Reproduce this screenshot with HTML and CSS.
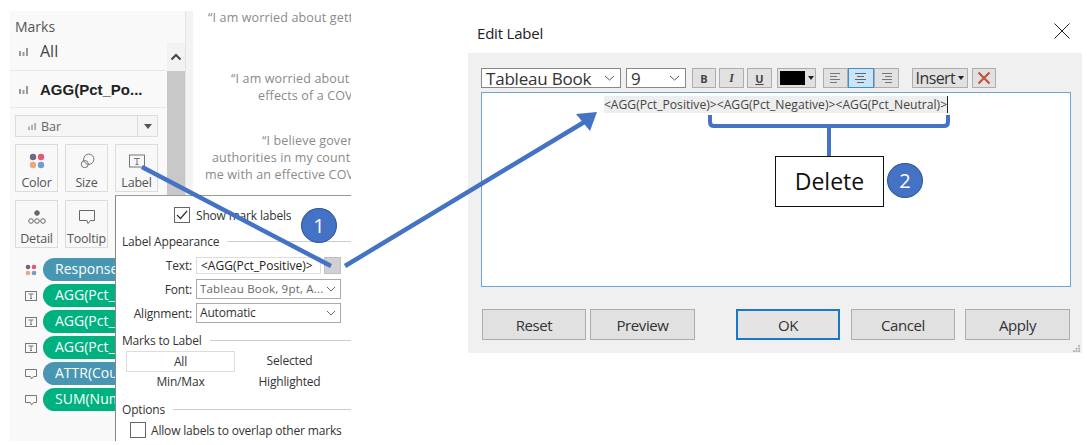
FILE: index.html
```html
<!DOCTYPE html>
<html lang="en">
<head>
<meta charset="utf-8">
<title>Edit Label</title>
<link rel="stylesheet" href="styles.css">
</head>
<body>
<div class="stage">

  <section class="workspace">
    <aside class="marks">
      <div class="marks-title">Marks</div>
      <div class="marks-body">
        <div class="marks-main">
          <div class="layer layer-all">
            <svg class="bars" viewBox="0 0 10 9"><path d="M1 4v5M4.500 5v4M8 1v8" stroke="#999" stroke-width="2"/></svg>
            <span>All</span>
          </div>
          <div class="layer layer-agg">
            <svg class="bars" viewBox="0 0 10 9"><path d="M1 4v5M4.500 5v4M8 1v8" stroke="#999" stroke-width="2"/></svg>
            <b>AGG(Pct_Po...</b>
          </div>
          <div class="mark-type">
            <svg class="bars-small" viewBox="0 0 10 9"><path d="M1 5v4M4.500 3v6M8 1v8" stroke="#aaa" stroke-width="2"/></svg>
            <span class="mark-type-name">Bar</span>
            <span class="mark-type-arrow"><i></i></span>
          </div>
          <div class="cards">
            <div class="card">
              <svg width="16" height="16" viewBox="0 0 16 16"><circle cx="4" cy="4" r="3.200" fill="#6f6585"/><circle cx="12" cy="4" r="3.200" fill="#e8596f"/><circle cx="4" cy="12" r="3.200" fill="#eda77c"/><circle cx="12" cy="12" r="3.200" fill="#6f9fcb"/></svg>
              <span>Color</span>
            </div>
            <div class="card">
              <svg width="18" height="16" viewBox="0 0 18 18" fill="none" stroke="#666"><circle cx="11" cy="7" r="5.800"/><circle cx="6.500" cy="12.500" r="4"/></svg>
              <span>Size</span>
            </div>
            <div class="card">
              <svg width="18" height="16" viewBox="0 0 18 16" fill="none"><rect x="1.500" y="2" width="15" height="12" stroke="#777"/><path d="M6 5.500h6M9 5.500v6M7.500 11.500h3" stroke="#777"/></svg>
              <span>Label</span>
            </div>
            <div class="card">
              <svg width="20" height="16" viewBox="0 0 20 16" fill="none" stroke="#666"><circle cx="10" cy="4" r="2.300" fill="#666"/><circle cx="4" cy="12" r="2.300"/><circle cx="10" cy="12" r="2.300"/><circle cx="16" cy="12" r="2.300"/></svg>
              <span>Detail</span>
            </div>
            <div class="card">
              <svg width="18" height="16" viewBox="0 0 18 16" fill="none"><path d="M1.500 1.500h15v10h-4l-2.500 3-1-3h-7.500z" stroke="#666"/></svg>
              <span>Tooltip</span>
            </div>
          </div>
        </div>
        <div class="marks-scroll">
          <div class="scroll-up"><svg width="12" height="8" viewBox="0 0 12 8" fill="none"><path d="M1.500 6.500l4.500-4.500 4.500 4.500" stroke="#444" stroke-width="2"/></svg></div>
          <div class="scroll-thumb"></div>
        </div>
      </div>
      <ul class="pills">
        <li class="pill-row">
          <svg class="pill-icon" viewBox="0 0 12 12"><circle cx="3" cy="3" r="2.300" fill="#6f6585"/><circle cx="9" cy="3" r="2.300" fill="#e8596f"/><circle cx="3" cy="9" r="2.300" fill="#eda77c"/><circle cx="9" cy="9" r="2.300" fill="#6f9fcb"/></svg>
          <span class="pill pill-blue">Response</span>
        </li>
        <li class="pill-row">
          <svg class="pill-icon" viewBox="0 0 12 12" fill="none" stroke="#777"><rect x=".5" y="1.500" width="11" height="9"/><path d="M3.500 4h5M6 4v4.500M5 8.500h2"/></svg>
          <span class="pill pill-green">AGG(Pct_Positive)</span>
        </li>
        <li class="pill-row">
          <svg class="pill-icon" viewBox="0 0 12 12" fill="none" stroke="#777"><rect x=".5" y="1.500" width="11" height="9"/><path d="M3.500 4h5M6 4v4.500M5 8.500h2"/></svg>
          <span class="pill pill-green">AGG(Pct_Negative)</span>
        </li>
        <li class="pill-row">
          <svg class="pill-icon" viewBox="0 0 12 12" fill="none" stroke="#777"><rect x=".5" y="1.500" width="11" height="9"/><path d="M3.500 4h5M6 4v4.500M5 8.500h2"/></svg>
          <span class="pill pill-green">AGG(Pct_Neutral)</span>
        </li>
        <li class="pill-row">
          <svg class="pill-icon" viewBox="0 0 12 12" fill="none" stroke="#777"><path d="M.5 1.500h11v7h-3l-2 2.500-1-2.500h-5z"/></svg>
          <span class="pill pill-blue">ATTR(Country)</span>
        </li>
        <li class="pill-row">
          <svg class="pill-icon" viewBox="0 0 12 12" fill="none" stroke="#777"><path d="M.5 1.500h11v7h-3l-2 2.500-1-2.500h-5z"/></svg>
          <span class="pill pill-green">SUM(Number)</span>
        </li>
      </ul>
    </aside>
    <div class="gutter"></div>
    <div class="viz">
      <p class="quote q1"><span class="l1">“I am worried about getting</span></p>
      <p class="quote q2"><span class="l2">“I am worried about potential</span><span class="l3">effects of a COVID-19</span></p>
      <p class="quote q3"><span class="l4">“I believe government</span><span class="l5">authorities in my country will</span><span class="l6">me with an effective COVID</span></p>
    </div>
  </section>

  <div class="popup">
    <label class="show-labels"><span class="check checked"><svg width="12" height="10" viewBox="0 0 12 10" fill="none"><path d="M1 5l3.500 3.500 6.500-7.500" stroke="#333" stroke-width="1.200"/></svg></span>Show mark labels</label>
    <div class="legend legend-first"><span>Label Appearance</span><i></i></div>
    <div class="form-row row-text">
      <span class="form-label">Text:</span>
      <span class="field field-text">&lt;AGG(Pct_Positive)&gt;</span>
      <span class="dots-btn"></span>
    </div>
    <div class="form-row row-font">
      <span class="form-label">Font:</span>
      <span class="field field-select field-muted">Tableau Book, 9pt, A...<svg width="10" height="6" viewBox="0 0 10 6" fill="none"><path d="M1 1l4 4 4-4" stroke="#666"/></svg></span>
    </div>
    <div class="form-row">
      <span class="form-label">Alignment:</span>
      <span class="field field-select">Automatic<svg width="10" height="6" viewBox="0 0 10 6" fill="none"><path d="M1 1l4 4 4-4" stroke="#666"/></svg></span>
    </div>
    <div class="legend legend-marks"><span>Marks to Label</span><i></i></div>
    <div class="mark-grid">
      <span class="selected-cell">All</span><span>Selected</span>
      <span>Min/Max</span><span>Highlighted</span>
    </div>
    <div class="legend legend-options"><span>Options</span><i></i></div>
    <label class="overlap"><span class="check"></span>Allow labels to overlap other marks</label>
  </div>

  <div class="dialog">
    <header class="dialog-head">
      <h1>Edit Label</h1>
      <svg class="close" width="16" height="16" viewBox="0 0 16 16" fill="none"><path d="M.5.5l15 15M15.500.5l-15 15" stroke="#222"/></svg>
    </header>
    <div class="dialog-body">
      <div class="toolbar">
        <span class="tool-select font-select">Tableau Book<svg width="11" height="6" viewBox="0 0 11 6" fill="none"><path d="M1 1l4.500 4 4.500-4" stroke="#555"/></svg></span>
        <span class="tool-select size-select">9<svg width="11" height="6" viewBox="0 0 11 6" fill="none"><path d="M1 1l4.500 4 4.500-4" stroke="#555"/></svg></span>
        <span class="tool tool-b">B</span>
        <span class="tool tool-i">I</span>
        <span class="tool tool-u">U</span>
        <span class="tool tool-color"><i class="swatch"></i><i class="caret"></i></span>
        <span class="align-group">
          <span class="tool-align"><svg width="11" height="10" viewBox="0 0 11 10"><path d="M0 .5h10M0 3.500h7M0 6.500h10M0 9.500h7" stroke="#777"/></svg></span>
          <span class="tool-align on"><svg width="11" height="10" viewBox="0 0 11 10"><path d="M0 .5h11M2 3.500h7M0 6.500h11M2 9.500h7" stroke="#666"/></svg></span>
          <span class="tool-align"><svg width="11" height="10" viewBox="0 0 11 10"><path d="M1 .5h10M4 3.500h7M1 6.500h10M4 9.500h7" stroke="#777"/></svg></span>
        </span>
        <span class="tool tool-insert">Insert<i class="caret"></i></span>
        <span class="tool tool-x"><svg width="14" height="14" viewBox="0 0 14 14" fill="none"><path d="M1.500 1.500l11 11M12.500 1.500l-11 11" stroke="#c0553f" stroke-width="2.200"/></svg></span>
      </div>
      <div class="editor"><span class="editor-text">&lt;AGG(Pct_Positive)&gt;&lt;AGG(Pct_Negative)&gt;&lt;AGG(Pct_Neutral)&gt;</span></div>
      <div class="actions">
        <span class="btn btn-reset">Reset</span>
        <span class="btn btn-preview">Preview</span>
        <span class="btn btn-ok">OK</span>
        <span class="btn btn-cancel">Cancel</span>
        <span class="btn btn-apply">Apply</span>
      </div>
      <svg class="grip" width="7" height="7" viewBox="0 0 8 8"><path d="M6 0h2v2h-2zM3 3h2v2h-2zM6 3h2v2h-2zM0 6h2v2h-2zM3 6h2v2h-2zM6 6h2v2h-2z" fill="#aaa"/></svg>
    </div>
  </div>

  <svg class="annotations" width="1087" height="445" viewBox="0 0 1087 445" fill="none">
    <path d="M142 167L331 266" stroke="#4472c4" stroke-width="4.500"/>
    <path d="M345 266L586 121" stroke="#4472c4" stroke-width="4.500"/>
    <path d="M597 112L576 114L590 131z" fill="#4472c4"/>
    <path d="M710 115v7q0 4 4 4H944q4 0 4-4v-7M829 126v30" stroke="#4472c4" stroke-width="4"/>
  </svg>
  <span class="badge badge-one">1</span>
  <span class="badge badge-two">2</span>
  <div class="delete-box">Delete</div>
</div>
</body>
</html>
```
FILE: styles.css
```css
* { box-sizing: border-box; }
html, body { margin: 0; padding: 0; background: #fff; }
.stage {
  position: relative;
  width: 1087px;
  height: 445px;
  overflow: hidden;
  font-family: "Open Sans", "Noto Sans", sans-serif;
  color: #333;
}

/* Tableau workspace */
.workspace {
  position: absolute;
  left: 10px;
  top: 11px;
  width: 341px;
  height: 430px;
  display: flex;
}
.marks {
  width: 175px;
  background: #f9f9f9;
  display: flex;
  flex-direction: column;
}
.marks-title {
  height: 32px;
  padding: 6px 0 0 5px;
  font-size: 14px;
  line-height: 20px;
  color: #555;
}
.marks-body { display: flex; height: 205px; }
.marks-main { width: 156px; }
.layer {
  display: flex;
  align-items: center;
  gap: 11px;
  padding-left: 9px;
  border-bottom: 1px solid #e6e6e6;
  color: #222;
}
.layer-all { height: 28px; font-size: 16px; padding-bottom: 11px; color: #444; }
.layer-agg { height: 37px; font-size: 15px; font-family: "Liberation Sans", sans-serif; }
.bars { width: 10px; height: 9px; }
.bars-small { width: 9px; height: 8px; }
.mark-type {
  margin: 7px 0 0 5px;
  width: 143px;
  height: 22px;
  display: flex;
  align-items: center;
  padding-left: 12px;
  gap: 4px;
  border: 1px solid #ddd;
  background: #f5f5f5;
  font-size: 12.500px;
  color: #666;
}
.mark-type-name { flex: 1; }
.mark-type-arrow {
  width: 20px;
  height: 20px;
  border-left: 1px solid #ddd;
  display: flex;
  align-items: center;
  justify-content: center;
}
.mark-type-arrow i {
  border: 4px solid transparent;
  border-top: 5px solid #555;
  border-bottom: 0;
}
.cards {
  margin: 7px 0 0 5px;
  display: grid;
  grid-template-columns: repeat(3, 43px);
  grid-auto-rows: 48px;
  gap: 8px 7px;
}
.card {
  border: 1px solid #dcdcdc;
  background: #f8f8f8;
  display: flex;
  flex-direction: column;
  align-items: center;
  padding-top: 8px;
  font-size: 12.500px;
  letter-spacing: -.2px;
  color: #555;
}
.card span { margin-top: 5px; line-height: 17px; }
.card svg { flex: none; }
.marks-scroll { width: 18px; margin-left: 1px; display: flex; flex-direction: column; }
.scroll-up {
  height: 28px;
  background: #f2f2f2;
  display: flex;
  align-items: center;
  justify-content: center;
}
.scroll-thumb { flex: 1; background: #c8c8c8; }
.pills {
  list-style: none;
  margin: 10px 0 0;
  padding: 0;
  display: flex;
  flex-direction: column;
  gap: 3px;
}
.pill-row { display: flex; align-items: center; gap: 6px; padding-left: 15px; height: 23px; overflow: hidden; }
.pill-icon { width: 12px; height: 12px; flex: none; }
.pill {
  height: 23px;
  width: 130px;
  padding-left: 12px;
  border-radius: 12px;
  font-size: 14px;
  line-height: 22px;
  color: #fff;
  white-space: nowrap;
  overflow: hidden;
}
.pill-blue { background: #4996b2; }
.pill-green { background: #00b180; }
.gutter {
  width: 8px;
  background: #f3f3f3;
  border-left: 1px solid #e4e4e4;
}
.viz { flex: 1; overflow: hidden; background: #fff; min-width: 0; }
.quote {
  margin: 0;
  display: flex;
  flex-direction: column;
  font-size: 12.500px;
  letter-spacing: .15px;
  line-height: 17px;
  color: #8a8a8a;
  white-space: nowrap;
}
.q1 { margin-top: -2px; }
.q2 { margin-top: 44px; }
.q3 { margin-top: 28px; }
.l1 { padding-left: 15px; }
.l2 { padding-left: 38px; }
.l3 { padding-left: 65px; }
.l4 { padding-left: 69px; }
.l5 { padding-left: 19px; }
.l6 { padding-left: 12px; }

/* Label popup */
.popup {
  position: absolute;
  left: 115px;
  top: 195px;
  width: 236px;
  height: 246px;
  background: #fff;
  border-left: 1px solid #888;
  border-top: 1px solid #999;
  padding: 11px 0 0 6px;
  font-size: 12px;
  letter-spacing: -.18px;
  color: #333;
}
.show-labels {
  display: flex;
  align-items: center;
  gap: 6px;
  margin-left: 52px;
  height: 16px;
}
.check {
  width: 16px;
  height: 16px;
  border: 1px solid #666;
  background: #fff;
  display: flex;
  align-items: center;
  justify-content: center;
}
.legend {
  display: flex;
  align-items: center;
  gap: 8px;
  height: 18px;
}
.legend i { flex: 1; height: 1px; background: #ccc; }
.legend-first { margin-top: 9px; }
.legend-marks { margin-top: 8px; }
.legend-options { margin-top: 7px; }
.form-row { display: flex; align-items: center; height: 20px; margin-top: 4px; }
.row-text { margin-top: 7px; height: 17px; }
.row-font { margin-top: 5px; }
.form-label { width: 74px; text-align: right; padding-right: 4px; flex: none; }
.field {
  border: 1px solid #aaa;
  height: 100%;
  line-height: 16px;
  padding-left: 3px;
  white-space: nowrap;
  background: #fff;
}
.field-text { width: 125px; border-color: #ddd; padding-left: 4px; line-height: 15px; color: #222; letter-spacing: 0; }
.field-select {
  width: 145px;
  display: flex;
  justify-content: space-between;
  align-items: center;
  padding-right: 4px;
  color: #333;
}
.field-muted { color: #666; font-size: 11.500px; letter-spacing: .2px; }
.dots-btn { width: 17px; height: 17px; margin-left: 3px; background: #d0d0d0; border: 1px solid #c0c0c0; }
.mark-grid {
  margin: 2px 0 0 4px;
  display: grid;
  grid-template-columns: 109px 109px;
  grid-auto-rows: 21px;
  text-align: center;
  line-height: 20px;
}
.selected-cell { border: 1px solid #ddd; }
.overlap {
  display: flex;
  align-items: center;
  gap: 5px;
  margin: 4px 0 0 8px;
  height: 16px;
  white-space: nowrap;
}

/* Edit Label dialog */
.dialog {
  position: absolute;
  left: 468px;
  top: 13px;
  width: 614px;
  height: 340px;
  display: flex;
  flex-direction: column;
}
.dialog-head {
  height: 40px;
  display: flex;
  align-items: center;
  justify-content: space-between;
  padding: 0 12px 0 9px;
}
.dialog-head h1 { margin: 0; font-size: 15px; font-weight: 400; letter-spacing: -.2px; color: #222; }
.close { margin-top: -4px; }
.dialog-body {
  flex: 1;
  position: relative;
  background: #f0f0f0;
  padding: 15px 11px 0 13px;
  display: flex;
  flex-direction: column;
}
.toolbar { display: flex; align-items: stretch; height: 20px; }
.tool-select {
  display: flex;
  align-items: center;
  justify-content: space-between;
  background: #fff;
  border: 1px solid #888;
  padding: 0 5px 0 4px;
  font-size: 17px;
  letter-spacing: -.2px;
  color: #333;
}
.font-select { width: 140px; }
.size-select { width: 60px; margin-left: 5px; }
.tool {
  display: flex;
  align-items: center;
  justify-content: center;
  background: #e1e1e1;
  border: 1px solid #adadad;
  font-size: 11px;
  font-weight: 700;
  color: #444;
}
.tool-b { width: 24px; margin-left: 6px; }
.tool-i { width: 25px; margin-left: 3px; font-style: italic; font-family: "Liberation Serif", serif; font-size: 12px; }
.tool-u { width: 25px; margin-left: 3px; text-decoration: underline; }
.tool-color { width: 39px; margin-left: 5px; gap: 3px; }
.swatch { width: 25px; height: 14px; background: #000; }
.caret { border: 3px solid transparent; border-top: 4px solid #222; border-bottom: 0; }
.align-group { display: flex; margin-left: 7px; }
.tool-align {
  width: 25.300px;
  display: flex;
  align-items: center;
  justify-content: center;
  background: #e1e1e1;
  border: 1px solid #adadad;
}
.tool-align.on { background: #cce4f7; border-color: #3f8fd0; }
.tool-insert {
  width: 56px;
  margin-left: 13px;
  gap: 3px;
  font-size: 16px;
  font-weight: 400;
  letter-spacing: -.6px;
  color: #333;
}
.tool-x { width: 24px; margin-left: 4px; }
.editor {
  margin-top: 4px;
  height: 195px;
  background: #fff;
  border: 1.500px solid #6ea3d4;
  padding-top: 3px;
  display: flex;
  justify-content: center;
  align-items: flex-start;
}
.editor-text {
  background: #eee;
  border-right: 1px solid #222;
  font-size: 12.150px;
  line-height: 17px;
  color: #444;
  white-space: nowrap;
}
.actions { display: flex; margin: 22px 0 0 1px; height: 31px; }
.btn {
  display: flex;
  align-items: center;
  justify-content: center;
  background: #e1e1e1;
  border: 1px solid #adadad;
  font-size: 15px;
  letter-spacing: -.4px;
  color: #333;
}
.btn-reset { width: 104px; }
.btn-preview { width: 105px; margin-left: 4px; }
.btn-ok { width: 104px; margin-left: 41px; background: #e4e4e4; border: 2px solid #1a78c8; }
.btn-cancel { width: 104px; margin-left: 11px; }
.btn-apply { width: 105px; margin-left: 10px; }
.grip { position: absolute; right: 2px; bottom: 1px; }

/* Annotations laid over the composite */
.annotations { position: absolute; left: 0; top: 0; pointer-events: none; }
.badge {
  position: absolute;
  width: 36px;
  height: 35px;
  border-radius: 50%;
  background: #4472c4;
  border: 1px solid #2f5597;
  color: #fff;
  font-size: 20px;
  line-height: 33px;
  text-align: center;
}
.badge-one { left: 301px; top: 208px; }
.badge-two { left: 887px; top: 163px; }
.delete-box {
  position: absolute;
  left: 775px;
  top: 156px;
  width: 109px;
  height: 51px;
  border: 1px solid #111;
  background: #fff;
  font-size: 23px;
  line-height: 49px;
  text-align: center;
  color: #111;
}
```
